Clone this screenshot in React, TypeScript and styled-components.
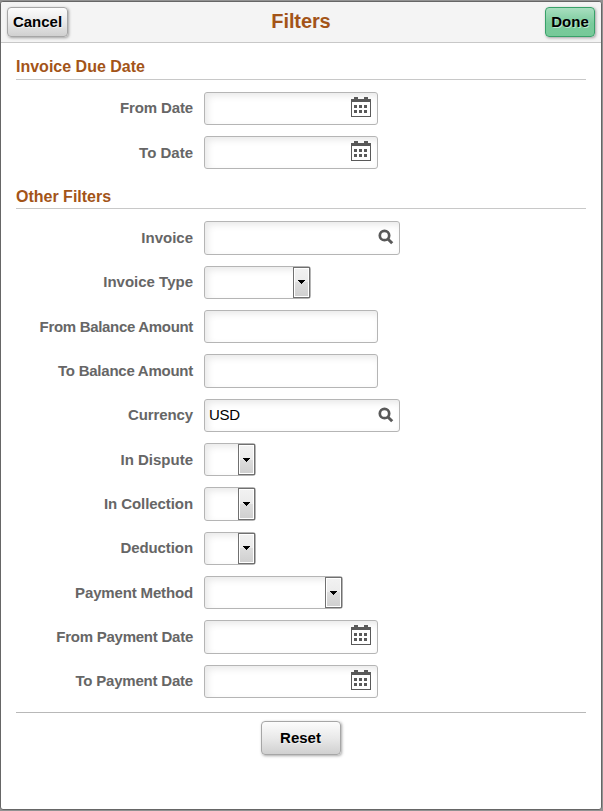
import React from "react";
import styled, { createGlobalStyle } from "styled-components";

const GlobalStyle = createGlobalStyle`
    * {
        box-sizing: border-box;
    }

    body {
        margin: 0;
        background: #8c8c8c;
        font-family: "Liberation Sans", Arial, sans-serif;
    }
`;

const Backdrop = styled.div`
    width: 603px;
    height: 811px;
    padding: 1px 1px 1px 0;
    background: #929292;
`;

const Modal = styled.div`
    width: 602px;
    height: 809px;
    overflow: hidden;
    border: 1px solid #666;
    border-radius: 3px;
    background: #fff;
`;

const Header = styled.header`
    display: flex;
    justify-content: space-between;
    height: 41px;
    padding: 5px 6px 0 6px;
    border-bottom: 1px solid #c8c8c8;
    background: #f4f4f4;
`;

const Title = styled.h1`
    margin: 0 11px 0 0;
    color: #a35418;
    font-size: 20px;
    letter-spacing: -0.1px;
    line-height: 29px;
`;

const Button = styled.button<{ $primary?: boolean; $width: number; $height?: number }>`
    width: ${p => p.$width}px;
    height: ${p => p.$height || 30}px;
    padding: 0 0 1px;
    border: 1px solid ${p => (p.$primary ? "#38a169" : "#a6a6a6")};
    border-radius: 4px;
    background: ${p =>
        p.$primary
            ? "linear-gradient(#a9dfc0, #7acb9c 55%, #76c998)"
            : "linear-gradient(#fcfcfc, #e9e9e9 50%, #d0d0d0)"};
    box-shadow: 1px 1px 3px rgba(0, 0, 0, 0.35);
    color: #000;
    font: bold 15px "Liberation Sans", Arial, sans-serif;
    text-shadow: 1px 1px 0 rgba(255, 255, 255, 0.5);
`;

const Content = styled.main`
    padding: 0 15px;
`;

const SectionTitle = styled.h2<{ $height: number }>`
    height: ${p => p.$height}px;
    margin: 0;
    padding-top: 14px;
    border-bottom: 1px solid #c8c8c8;
    color: #a35418;
    font-size: 16px;
    line-height: 20px;
`;

const Rows = styled.div<{ $height: number; $offset: number }>`
    height: ${p => p.$height}px;
    padding-top: ${p => p.$offset}px;
`;

const Row = styled.div`
    display: grid;
    grid-template-columns: 177px auto;
    column-gap: 11px;
    justify-content: start;
    align-items: start;
    height: 44.33px;
`;

const Label = styled.label<{ $spacing: number }>`
    padding-top: 0.6px;
    color: #666;
    font-size: 15px;
    font-weight: bold;
    letter-spacing: ${p => p.$spacing}px;
    line-height: 32px;
    text-align: right;
    white-space: nowrap;
`;

const Field = styled.div<{ $width: number }>`
    display: flex;
    justify-content: space-between;
    width: ${p => p.$width}px;
    height: 33.2px;
    border: 1px solid #b5b5b5;
    border-radius: 3px;
    background: #fff;
    box-shadow: inset 3px 3px 7px rgba(0, 0, 0, 0.09);
`;

const Value = styled.span`
    padding-left: 4px;
    color: #000;
    font-size: 15px;
    letter-spacing: -0.3px;
    line-height: 30px;
`;

const SelectArrow = styled.span`
    display: flex;
    align-items: center;
    justify-content: center;
    width: 17px;
    border: 1px solid #707070;
    background: linear-gradient(#f2f2f2, #ebebeb 50%, #dddddd 50%, #cfcfcf);
    box-shadow: inset 0 0 0 1px #fff;
`;

const CalendarIcon = styled.svg`
    margin: 4px 6px 0 0;
`;

const SearchIcon = styled.svg`
    margin: 7px 5px 0 0;
`;

const Footer = styled.footer`
    display: flex;
    justify-content: center;
    padding: 8px 1px 0 0;
    border-top: 1px solid #b8b8b8;
`;

const Calendar = () => (
    <CalendarIcon width="20" height="21" viewBox="0 0 20 21" fill="#595959" shapeRendering="crispEdges">
        <path d="M3 0h4v2h6V0h4v2h3v18H0V2h3zM1 5v14h18V5z" fillRule="evenodd" />
        <path d="M3 8h3v3H3zM8 8h3v3H8zM13 8h3v3h-3zM3 13h3v3H3zM8 13h3v3H8zM13 13h3v3h-3z" />
    </CalendarIcon>
);

const Search = () => (
    <SearchIcon width="16" height="16" viewBox="0 0 16 16" fill="none" stroke="#595959">
        <circle cx="6.5" cy="6.5" r="4.7" strokeWidth="2.7" />
        <path d="M9.9 10l4.3 4.2" strokeWidth="3" />
    </SearchIcon>
);

const Arrow = () => (
    <SelectArrow>
        <svg width="7" height="4" viewBox="0 0 7 4" shapeRendering="crispEdges">
            <path d="M0 0h7v1H6v1H5v1H4v1H3V3H2V2H1V1H0z" />
        </svg>
    </SelectArrow>
);

type FilterField = {
    label: string;
    width: number;
    kind?: "date" | "search" | "select";
    value?: string;
    spacing?: number;
};

const dueDateFields: FilterField[] = [
    { label: "From Date", width: 174, kind: "date", spacing: -0.12 },
    { label: "To Date", width: 174, kind: "date" },
];

const otherFields: FilterField[] = [
    { label: "Invoice", width: 196, kind: "search" },
    { label: "Invoice Type", width: 107, kind: "select" },
    { label: "From Balance Amount", width: 174, spacing: -0.32 },
    { label: "To Balance Amount", width: 174, spacing: -0.25 },
    { label: "Currency", width: 196, kind: "search", value: "USD", spacing: -0.12 },
    { label: "In Dispute", width: 52, kind: "select" },
    { label: "In Collection", width: 52, kind: "select", spacing: -0.08 },
    { label: "Deduction", width: 52, kind: "select", spacing: -0.08 },
    { label: "Payment Method", width: 139, kind: "select", spacing: -0.15 },
    { label: "From Payment Date", width: 174, kind: "date", spacing: -0.24 },
    { label: "To Payment Date", width: 174, kind: "date", spacing: -0.2 },
];

const FilterRow: React.FC<FilterField> = ({ label, width, kind, value, spacing = 0 }) => (
    <Row>
        <Label $spacing={spacing}>{label}</Label>
        <Field $width={width}>
            <Value>{value}</Value>
            {kind === "date" && <Calendar />}
            {kind === "search" && <Search />}
            {kind === "select" && <Arrow />}
        </Field>
    </Row>
);

const App: React.FC = () => {
    return (
        <Backdrop>
            <GlobalStyle />
            <Modal>
                <Header>
                    <Button $width={61}>Cancel</Button>
                    <Title>Filters</Title>
                    <Button $primary $width={50}>
                        Done
                    </Button>
                </Header>
                <Content>
                    <SectionTitle $height={37}>Invoice Due Date</SectionTitle>
                    <Rows $height={93} $offset={11.8}>
                        {dueDateFields.map(field => (
                            <FilterRow key={field.label} {...field} />
                        ))}
                    </Rows>
                    <SectionTitle $height={36}>Other Filters</SectionTitle>
                    <Rows $height={503} $offset={12.4}>
                        {otherFields.map(field => (
                            <FilterRow key={field.label} {...field} />
                        ))}
                    </Rows>
                    <Footer>
                        <Button $width={80} $height={34}>
                            Reset
                        </Button>
                    </Footer>
                </Content>
            </Modal>
        </Backdrop>
    );
};

export default App;
